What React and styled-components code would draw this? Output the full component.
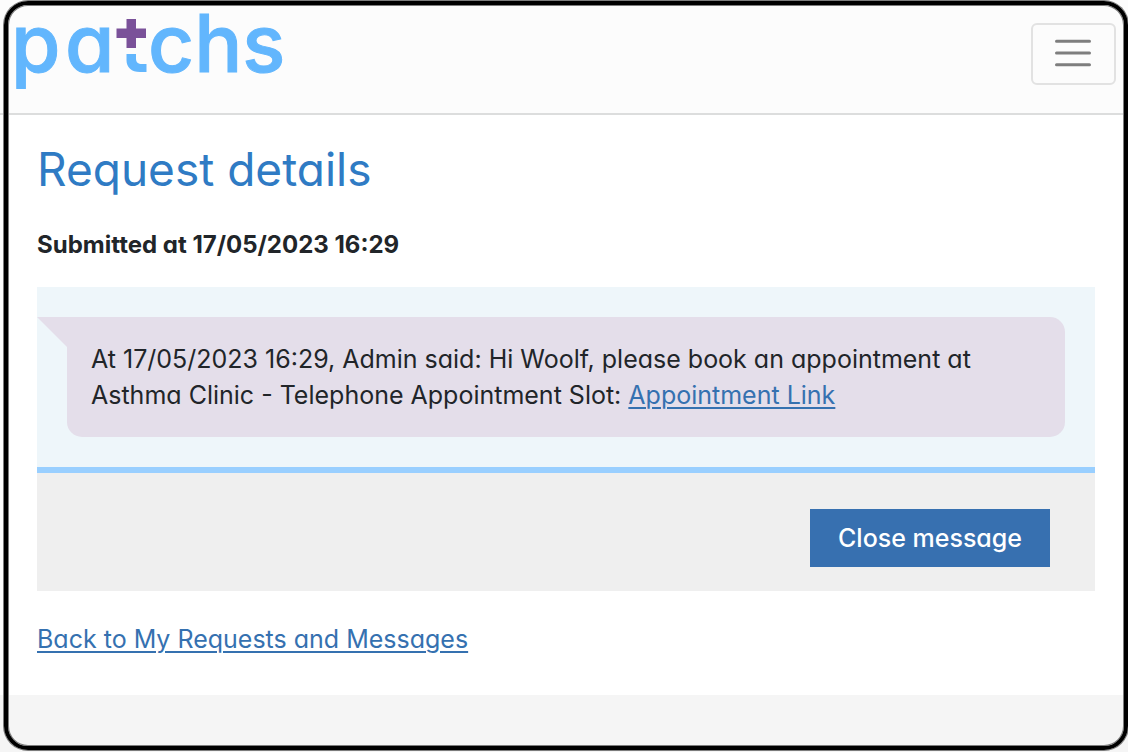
import React from "react";
import styled, { createGlobalStyle } from "styled-components";

const GlobalStyle = createGlobalStyle`
  *, *::before, *::after { box-sizing: border-box; }
  body {
    margin: 0;
    background: #f5f5f5;
    color: #212529;
    font-family: Inter, "Open Sans", "Liberation Sans", sans-serif;
    font-feature-settings: "cv11" 1;
    font-size: 25px;
    line-height: 36px;
  }
`;

const Page = styled.div`
  position: relative;
  min-height: 100vh;
`;

const Frame = styled.div`
  position: absolute;
  inset: 1px 0 2px 4px;
  border: 4px solid #000;
  border-radius: 24px;
  box-shadow: 0 0 0 1px #7d7d7d, inset 0 0 0 1px #7d7d7d;
  pointer-events: none;
`;

const Header = styled.header`
  display: flex;
  justify-content: space-between;
  align-items: flex-start;
  padding: 10px 12px 8px 14px;
  background: #fcfcfc;
  border-bottom: 2px solid #dcdddd;
`;

const Brand = styled.a`
  display: block;
  height: 95px;
`;

const LogoArt = styled.svg`
  display: block;
  width: 280px;
  height: 95px;
  overflow: visible;

  text {
    font-family: Inter, sans-serif;
    font-size: 80px;
    font-weight: 500;
    fill: #62b6fd;
    stroke: #62b6fd;
    stroke-width: 1px;
  }
`;

const MenuButton = styled.button`
  display: flex;
  align-items: center;
  justify-content: center;
  width: 85px;
  height: 62px;
  margin-top: 13px;
  padding: 0 1px 2px 0;
  background: transparent;
  border: 2px solid #e2e2e2;
  border-radius: 6px;
  cursor: pointer;
`;

const Main = styled.main`
  padding: 27px 33px 38px 37px;
  background: #fff;
`;

const Title = styled.h1`
  margin: 0 0 31px;
  color: #2f7bc4;
  font-size: 46px;
  font-weight: 400;
  line-height: 54px;
`;

const Submitted = styled.p`
  margin: 0 0 24px;
  font-size: 24px;
  font-weight: 700;
`;

const Thread = styled.section`
  padding: 30px;
  background: #eef6fa;
  border-bottom: 6px solid #99cfff;
`;

const Bubble = styled.p`
  position: relative;
  margin: 0;
  padding: 24px;
  background: #e4deea;
  border-radius: 0 15px 15px 15px;

  &::before {
    content: "";
    position: absolute;
    top: 0;
    right: 100%;
    width: 30px;
    height: 30px;
    background: inherit;
    clip-path: polygon(0 0, 100% 0, 100% 100%);
  }
`;

const Link = styled.a`
  color: #3571b0;
  text-decoration: underline;
  text-decoration-thickness: 2px;
  text-underline-offset: 3px;
`;

const Actions = styled.div`
  display: flex;
  justify-content: flex-end;
  margin-bottom: 30px;
  padding: 36px 45px 24px;
  background: #efefef;
`;

const CloseButton = styled.button`
  width: 240px;
  height: 58px;
  padding: 0;
  border: 0;
  background: #3770b0;
  color: #fff;
  font: inherit;
  font-feature-settings: inherit;
  font-weight: 500;
  cursor: pointer;
`;

function Logo() {
  return (
    <LogoArt viewBox="0 0 280 95" aria-hidden="true">
      <text x="-3" y="62">p</text>
      <text x="51" y="62">a</text>
      <path fill="#7a5199" d="M112.500 9h9.500v9.500h10v9.500h-10v10h-9.500V28h-10v-9.500h10z" />
      <path fill="#62b6fd" d="M112.500 44h9.500v4.500c0 4 2 5.500 6 5.500h4.500v8h-6.500c-8.500 0-13.500-4.500-13.500-12z" />
      <text x="134" y="62">chs</text>
    </LogoArt>
  );
}

function MenuIcon() {
  return (
    <svg width="36" height="28" viewBox="0 0 36 28" aria-hidden="true">
      <path d="M1.500 2.250h33M1.500 14h33M1.500 25.750h33" stroke="#7e7e7e" strokeWidth="3" strokeLinecap="round" />
    </svg>
  );
}

export default function App() {
  return (
    <>
      <GlobalStyle />
      <Page>
        <Header>
          <Brand href="#" aria-label="patchs">
            <Logo />
          </Brand>
          <MenuButton type="button" aria-label="Toggle navigation">
            <MenuIcon />
          </MenuButton>
        </Header>
        <Main>
          <Title>Request details</Title>
          <Submitted>Submitted at 17/05/2023 16:29</Submitted>
          <Thread>
            <Bubble>
              At 17/05/2023 16:29, Admin said: Hi Woolf, please book an appointment at
              Asthma Clinic - Telephone Appointment Slot: <Link href="#">Appointment Link</Link>
            </Bubble>
          </Thread>
          <Actions>
            <CloseButton type="button">Close message</CloseButton>
          </Actions>
          <Link href="#">Back to My Requests and Messages</Link>
        </Main>
        <Frame />
      </Page>
    </>
  );
}
